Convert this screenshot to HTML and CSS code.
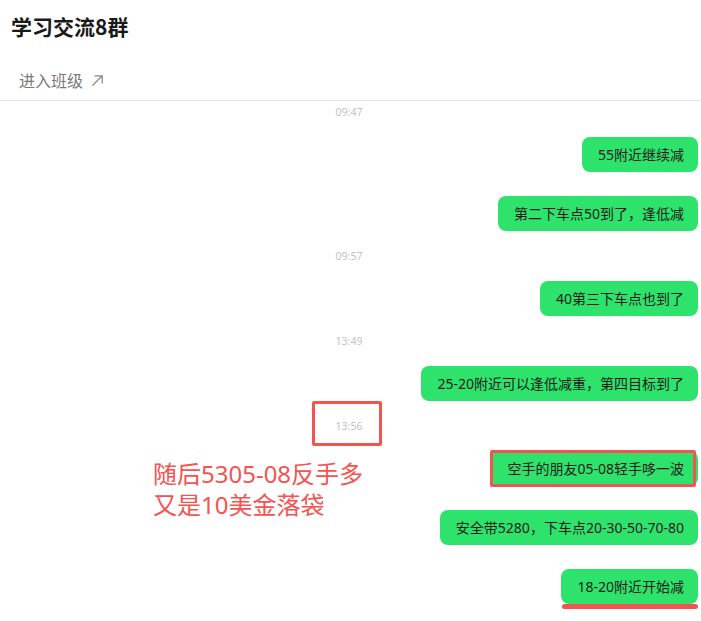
FILE: index.html
```html
<!DOCTYPE html>
<html lang="zh-CN">
<head>
    <meta charset="UTF-8">
    <meta name="viewport" content="width=device-width, initial-scale=1.0">
    <title>学习交流8群</title>
    <link rel="stylesheet" href="styles.css">
</head>
<body>
    <div class="page">
        <div class="header">
            <h1 class="title">学习交流8群</h1>
            <a class="enter" href="#">进入班级
                <svg class="enter-icon" width="13" height="13" viewBox="0 0 13 13">
                    <path d="M1.5 11.5 L11 2 M3.5 1.8 H11.2 V9.5" fill="none" stroke="#8a8a8a" stroke-width="1.3"/>
                </svg>
            </a>
        </div>
        <div class="chat">
            <div class="time first"><span>09:47</span></div>
            <div class="msg"><div class="bubble">55附近继续减</div></div>
            <div class="msg"><div class="bubble">第二下车点50到了，逢低减</div></div>
            <div class="time"><span>09:57</span></div>
            <div class="msg"><div class="bubble">40第三下车点也到了</div></div>
            <div class="time"><span>13:49</span></div>
            <div class="msg"><div class="bubble">25-20附近可以逢低减重，第四目标到了</div></div>
            <div class="time"><span class="marked">13:56</span></div>
            <div class="msg"><div class="bubble boxed">空手的朋友05-08轻手哆一波</div></div>
            <div class="msg"><div class="bubble">安全带5280，下车点20-30-50-70-80</div></div>
            <div class="msg"><div class="bubble underlined">18-20附近开始减</div></div>
        </div>
        <div class="note">
            <div>随后5305-08反手多</div>
            <div>又是10美金落袋</div>
        </div>
    </div>
</body>
</html>
```

FILE: styles.css
```css
body {
    margin: 0;
    font-family: "Noto Sans", "Noto Sans CJK SC", sans-serif;
    background: #fff;
    color: #1c1c1c;
}
.page {
    position: relative;
    width: 701px;
    min-height: 621px;
}
.header {
    padding: 12px 0 9px;
    border-bottom: 1px solid #e6e6e6;
}
.title {
    margin: 0;
    padding: 0 11px;
    font-family: "Noto Sans CJK SC", sans-serif;
    font-size: 21px;
    line-height: 28px;
    font-weight: bold;
    color: #1a1a1a;
}
.enter {
    display: flex;
    align-items: center;
    gap: 8px;
    margin-top: 29px;
    padding: 0 19px;
    font-family: "Noto Sans CJK SC", sans-serif;
    font-size: 16px;
    line-height: 22px;
    color: #7a7a7a;
    text-decoration: none;
}
.enter-icon {
    margin-top: 1px;
}
.chat {
    display: flex;
    flex-direction: column;
    padding-right: 3px;
}
.time {
    height: 26px;
    line-height: 26px;
    margin-top: 12px;
    text-align: center;
    font-size: 10.5px;
    color: #c2c2c2;
}
.time.first {
    margin-top: -2px;
}
.time span {
    position: relative;
    display: inline-block;
}
.marked::after {
    content: "";
    position: absolute;
    left: -24px;
    right: -20px;
    top: -12px;
    bottom: -7px;
    border: 3px solid #f55250;
    border-radius: 2px;
}
.msg {
    display: flex;
    justify-content: flex-end;
    margin-top: 24px;
}
.time + .msg {
    margin-top: 12px;
}
.bubble {
    position: relative;
    padding: 8px 14px 8px 16px;
    font-size: 14px;
    line-height: 19px;
    background: #2ee36b;
    border-radius: 8px;
    color: #1c1c1c;
}
.boxed::after {
    content: "";
    position: absolute;
    left: -1px;
    right: 2px;
    top: -1px;
    bottom: -1px;
    border: 3px solid #f55250;
    border-radius: 2px;
}
.underlined::after {
    content: "";
    position: absolute;
    left: 1px;
    right: 0;
    top: 100%;
    height: 5px;
    background: #f55250;
    border-radius: 3px;
}
.note {
    position: absolute;
    left: 153px;
    top: 458px;
    font-size: 24px;
    line-height: 31px;
    color: #f55250;
}
```
